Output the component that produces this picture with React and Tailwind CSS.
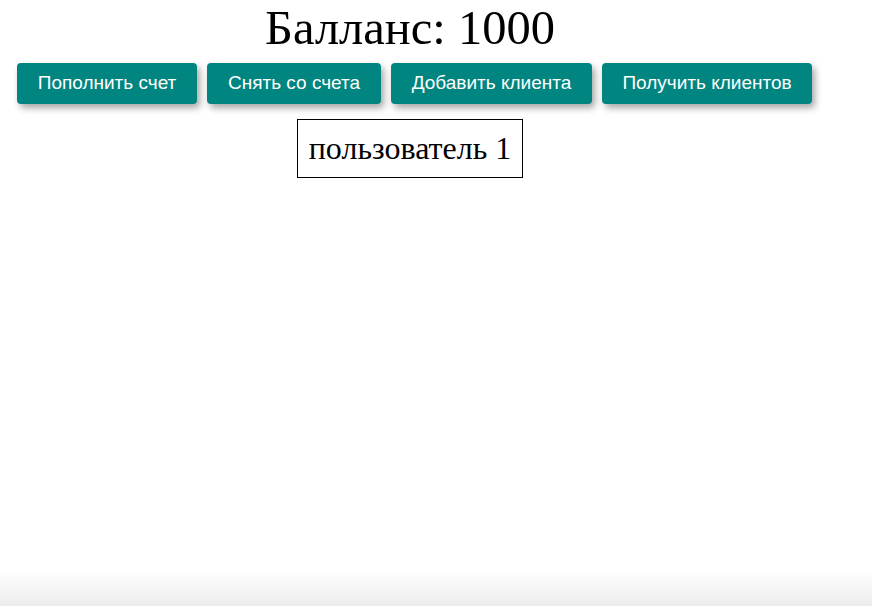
import React from "react";

const buttons = [
  { t: "Пополнить счет", w: "w-[180px]" },
  { t: "Снять со счета", w: "w-[174px]" },
  { t: "Добавить клиента", w: "w-[201px]" },
  { t: "Получить клиентов", w: "w-[210px]" },
];

export default function App() {
  return (
    <div className="min-h-[606px] bg-white relative">
      <div className="w-[820px] flex flex-col items-center">
        <h1 className="text-[48.5px] leading-[55px] font-normal text-black" style={{ fontFamily: '"Liberation Serif", serif' }}>
          Балланс: 1000
        </h1>
        <div className="flex gap-[10px] mt-[8px] self-start ml-[17px]">
          {buttons.map((b) => (
            <button
              key={b.t}
              className={`${b.w} h-[41px] bg-[#008580] text-white text-[19px] text-center rounded-[4px] shadow-[3px_4px_7px_rgba(0,0,0,0.35)]`}
              style={{ fontFamily: '"Liberation Sans", Arial, sans-serif' }}
            >
              {b.t}
            </button>
          ))}
        </div>
        <div
          className="mt-[15px] border border-black px-[11px] py-[10px] text-[32px] leading-[37px] text-black"
          style={{ fontFamily: '"Liberation Serif", serif' }}
        >
          пользователь 1
        </div>
      </div>
      <div className="fixed left-0 right-0 bottom-0 h-[36px] bg-gradient-to-b from-[#ffffff00] to-[#ececec]" />
    </div>
  );
}
